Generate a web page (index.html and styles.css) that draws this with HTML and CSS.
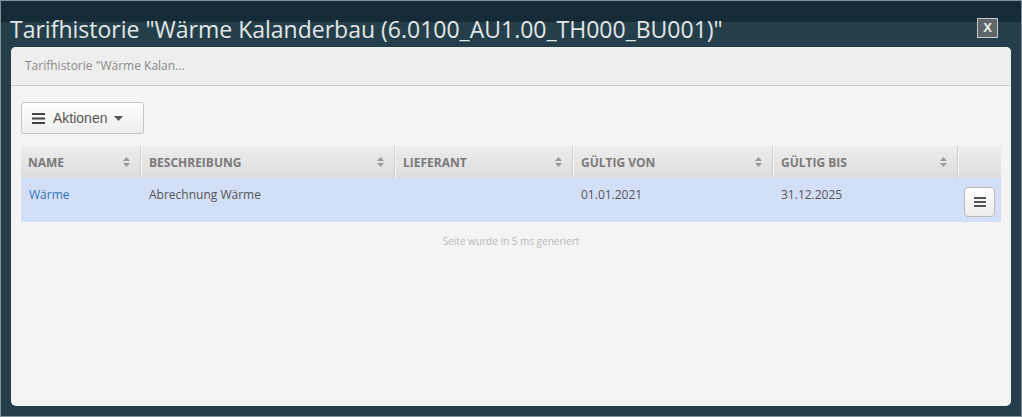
FILE: index.html
```html
<!DOCTYPE html>
<html lang="de">
<head>
    <meta charset="UTF-8">
    <title>Tarifhistorie</title>
    <link rel="stylesheet" href="styles.css">
</head>
<body>
<div class="dialog">
    <div class="dialog-title">
        <span>Tarifhistorie "Wärme Kalanderbau (6.0100_AU1.00_TH000_BU001)"</span>
        <button class="close">X</button>
    </div>

    <div class="panel">
        <div class="panel-head">Tarifhistorie "Wärme Kalan...</div>

        <div class="panel-body">
            <button class="btn-actions">
                <svg width="13" height="11" viewBox="0 0 13 11"><rect y="0" width="13" height="2" fill="#444"/><rect y="4.5" width="13" height="2" fill="#444"/><rect y="9" width="13" height="2" fill="#444"/></svg>
                Aktionen
                <svg width="9" height="5" viewBox="0 0 9 5"><path d="M0 0 L9 0 L4.5 5 Z" fill="#555"/></svg>
            </button>

            <table class="grid">
                <colgroup>
                    <col style="width:120px">
                    <col style="width:254px">
                    <col style="width:178px">
                    <col style="width:200px">
                    <col style="width:185px">
                    <col style="width:43px">
                </colgroup>
                <thead>
                    <tr>
                        <th><div class="th">NAME<svg class="sort" viewBox="0 0 7 10"><path d="M0 4 L3.5 0 L7 4 Z M0 6 L3.5 10 L7 6 Z"/></svg></div></th>
                        <th><div class="th">BESCHREIBUNG<svg class="sort" viewBox="0 0 7 10"><path d="M0 4 L3.5 0 L7 4 Z M0 6 L3.5 10 L7 6 Z"/></svg></div></th>
                        <th><div class="th">LIEFERANT<svg class="sort" viewBox="0 0 7 10"><path d="M0 4 L3.5 0 L7 4 Z M0 6 L3.5 10 L7 6 Z"/></svg></div></th>
                        <th><div class="th">GÜLTIG VON<svg class="sort" viewBox="0 0 7 10"><path d="M0 4 L3.5 0 L7 4 Z M0 6 L3.5 10 L7 6 Z"/></svg></div></th>
                        <th><div class="th">GÜLTIG BIS<svg class="sort" viewBox="0 0 7 10"><path d="M0 4 L3.5 0 L7 4 Z M0 6 L3.5 10 L7 6 Z"/></svg></div></th>
                        <th></th>
                    </tr>
                </thead>
                <tbody>
                    <tr>
                        <td><a href="#">Wärme</a></td>
                        <td>Abrechnung Wärme</td>
                        <td></td>
                        <td>01.01.2021</td>
                        <td>31.12.2025</td>
                        <td class="cell-menu">
                            <button class="btn-row">
                                <svg width="12" height="10" viewBox="0 0 12 10"><rect y="0" width="12" height="2" fill="#555"/><rect y="4" width="12" height="2" fill="#555"/><rect y="8" width="12" height="2" fill="#555"/></svg>
                            </button>
                        </td>
                    </tr>
                </tbody>
            </table>

            <p class="generated">Seite wurde in 5 ms generiert</p>
        </div>
    </div>
</div>
</body>
</html>
```

FILE: styles.css
```css
*{
    margin: 0;
    padding: 0;
    box-sizing: border-box;
}

body{
    width: 1022px;
    height: 417px;
    background: #233f4a;
    font-family: 'Open Sans', sans-serif;
}

.dialog{
    height: 417px;
    border: 1px solid #7f9197;
    background: linear-gradient(#152c38 0, #152c38 21px, #243f4a 21px);
    padding: 0 10px 10px 9px;
    display: flex;
    flex-direction: column;
}

.dialog-title{
    height: 46px;
    display: flex;
    align-items: center;
    justify-content: space-between;
    padding-top: 10px;
    color: #e3e6e7;
    font-size: 23px;
    white-space: nowrap;
}

.close{
    width: 21px;
    height: 20px;
    margin-right: 13px;
    margin-top: -3px;
    background: #5f6669;
    border: 1px solid #c8cbcc;
    color: #eee;
    font-family: 'Liberation Sans', sans-serif;
    font-weight: bold;
    font-size: 13px;
    line-height: 17px;
}

.panel{
    flex: 1;
    margin-left: 1px;
    background: #f4f4f4;
    border-radius: 5px;
    overflow: hidden;
}

.panel-head{
    height: 39px;
    background: #eeeeee;
    border-bottom: 1px solid #c9c9c9;
    padding-left: 14px;
    font-size: 12px;
    color: #8a8a8a;
    line-height: 38px;
}

.panel-body{
    padding: 16px 10px;
}

.btn-actions{
    height: 32px;
    width: 123px;
    display: flex;
    align-items: center;
    gap: 8px;
    padding-left: 10px;
    border: 1px solid #c6c6c6;
    border-radius: 3px;
    background: linear-gradient(#ffffff, #ededed);
    font-family: 'Liberation Sans', sans-serif;
    font-size: 14px;
    color: #555;
}

.btn-actions svg:last-child{
    margin-left: -1px;
}

.grid{
    margin-top: 12px;
    width: 980px;
    border-collapse: separate;
    border-spacing: 0;
    table-layout: fixed;
}

.grid th{
    height: 32px;
    background: linear-gradient(#ededed, #dcdcdc);
    border-left: 1px solid #f6f6f6;
    border-right: 1px solid #cfcfcf;
    text-align: left;
    font-size: 12px;
    font-weight: bold;
    color: #7a7a7a;
}

.grid th:first-child{
    border-left: 0;
    border-top-left-radius: 4px;
}

.grid th:last-child{
    border-right: 0;
    border-top-right-radius: 4px;
}

.th{
    display: flex;
    align-items: center;
    justify-content: space-between;
    padding: 0 10px 0 7px;
}

.sort{
    width: 7px;
    height: 10px;
    fill: #9a9a9a;
}

.grid td{
    height: 44px;
    background: #d3dff7;
    vertical-align: top;
    padding: 8px 8px 0;
    font-size: 12px;
    color: #555;
}

.grid td a{
    color: #2f74bd;
    text-decoration: none;
}

.grid td.cell-menu{
    padding: 9px 6px 0 0;
    text-align: right;
}

.btn-row{
    width: 31px;
    height: 30px;
    border: 1px solid #b9b9b9;
    border-radius: 4px;
    background: linear-gradient(#ffffff, #ececec);
    display: inline-flex;
    align-items: center;
    justify-content: center;
}

.generated{
    margin-top: 12px;
    text-align: center;
    font-size: 10px;
    color: #b8b8b8;
}
```
